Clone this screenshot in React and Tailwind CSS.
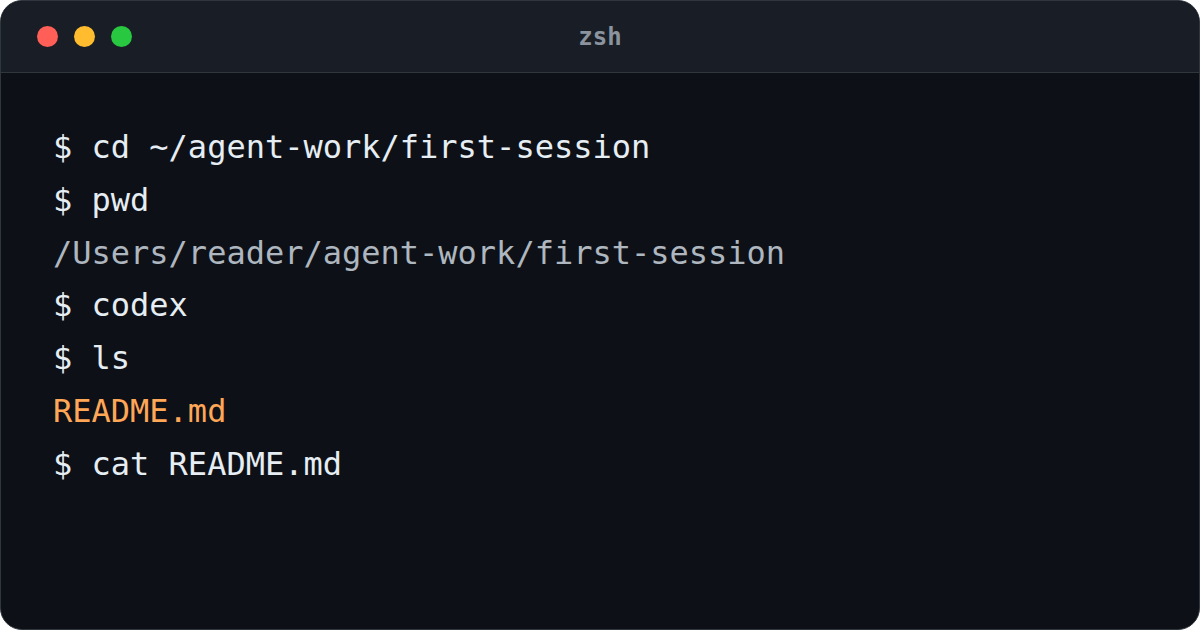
const lines = [
  { text: '$ cd ~/agent-work/first-session', tone: 'cmd' },
  { text: '$ pwd', tone: 'cmd' },
  { text: '/Users/reader/agent-work/first-session', tone: 'out' },
  { text: '$ codex', tone: 'cmd' },
  { text: '$ ls', tone: 'cmd' },
  { text: 'README.md', tone: 'file' },
  { text: '$ cat README.md', tone: 'cmd' },
];

const toneClass = {
  cmd: 'text-[#e6edf3]',
  out: 'text-[#aeb6bf]',
  file: 'text-[#ffa657]',
};

export default function App() {
  return (
    <div className="w-[1200px] h-[630px] bg-white">
      <div
        className="w-full h-full flex flex-col rounded-[22px] overflow-hidden border border-[#30363d] bg-[#0d1117]"
        style={{ fontFamily: '"DejaVu Sans Mono", "Liberation Mono", monospace' }}
      >
        {/* title bar */}
        <div className="relative h-[72px] shrink-0 flex items-center bg-[#191d25] border-b border-[#30363d] px-[36px]">
          <div className="flex gap-[16px]">
            <span className="w-[21px] h-[21px] rounded-full bg-[#ff5f57]" />
            <span className="w-[21px] h-[21px] rounded-full bg-[#febc2e]" />
            <span className="w-[21px] h-[21px] rounded-full bg-[#28c840]" />
          </div>
          <div className="absolute inset-0 flex items-center justify-center text-[24px] font-bold text-[#8b949e]">
            zsh
          </div>
        </div>

        {/* terminal body */}
        <div className="flex-1 pt-[48px] pl-[52px] text-[32px] leading-[52.83px] whitespace-pre">
          {lines.map((l, i) => (
            <div key={i} className={toneClass[l.tone]}>{l.text}</div>
          ))}
        </div>
      </div>
    </div>
  );
}
